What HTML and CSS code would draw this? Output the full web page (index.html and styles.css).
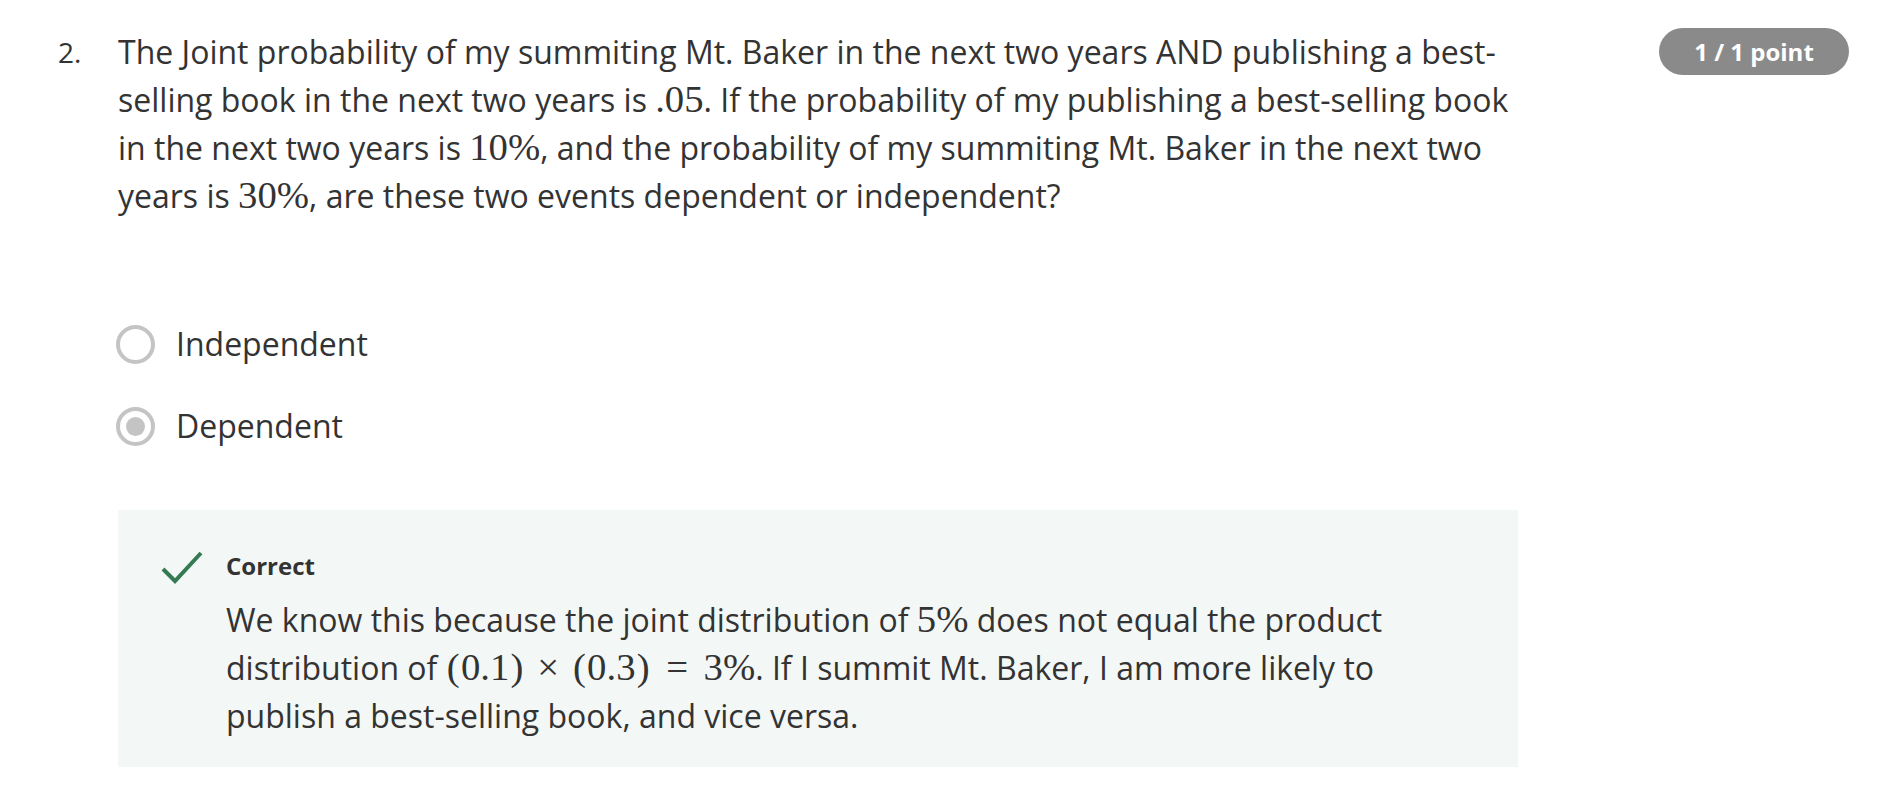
FILE: index.html
```html
<!DOCTYPE html>
<html lang="en">
<head>
<meta charset="utf-8">
<title>Quiz question</title>
<link rel="stylesheet" href="styles.css">
</head>
<body>
<div class="question">
  <div class="num">2.</div>
  <div class="main">
    <div class="prompt">The Joint probability of my summiting Mt. Baker in the next two years AND publishing a best-selling book in the next two years is <span class="m">.05</span>. If the probability of my publishing a best-selling book in the next two years is <span class="m">10%</span>, and the probability of my summiting Mt. Baker in the next two years is <span class="m">30%</span>, are these two events dependent or independent?</div>
    <div class="options">
      <div class="option"><span class="radio"></span><span class="label">Independent</span></div>
      <div class="option"><span class="radio checked"></span><span class="label">Dependent</span></div>
    </div>
    <div class="feedback">
      <svg class="check" width="42" height="34" viewBox="0 0 42 34"><path d="M2 19 L14 31 L40 3" fill="none" stroke="#357a52" stroke-width="4"/></svg>
      <div class="fb-body">
        <div class="fb-title">Correct</div>
        <div class="fb-text">We know this because the joint distribution of <span class="m">5%</span> does not equal the product distribution of <span class="m"><span class="p">(</span>0.1<span class="p">)</span><span class="bin">×</span><span class="p">(</span>0.3<span class="p">)</span><span class="rel">=</span>3%</span>. If I summit Mt. Baker, I am more likely to publish a best-selling book, and vice versa.</div>
      </div>
    </div>
  </div>
  <div class="badge">1 / 1 point</div>
</div>
</body>
</html>
```

FILE: styles.css
```css
html, body {
  margin: 0;
  padding: 0;
  background: #ffffff;
}
body {
  font-family: "Open Sans", "Liberation Sans", sans-serif;
  color: #333333;
}
.question {
  display: flex;
  align-items: flex-start;
  padding: 28px 0 0 0;
}
.num {
  width: 118px;
  padding-left: 58px;
  box-sizing: border-box;
  font-size: 28px;
  line-height: 48px;
  color: #333;
  flex: none;
}
.main {
  width: 1400px;
  flex: none;
}
.prompt {
  font-size: 32px;
  line-height: 48px;
}
.m {
  font-family: "Liberation Serif", "DejaVu Serif", serif;
  font-size: 1.21em;
  line-height: 1;
}
.p {
  margin: 0 0.03em;
}
.bin {
  margin: 0 0.33em;
}
.rel {
  margin: 0 0.4em;
}
.options {
  margin-top: 100px;
  display: flex;
  flex-direction: column;
  gap: 34px;
}
.option {
  display: flex;
  align-items: center;
  height: 48px;
}
.radio {
  width: 39px;
  height: 39px;
  box-sizing: border-box;
  border: 4px solid #c4c4c4;
  border-radius: 50%;
  margin-left: -2px;
  margin-right: 21px;
  display: flex;
  align-items: center;
  justify-content: center;
}
.radio.checked::after {
  content: "";
  width: 19px;
  height: 19px;
  border-radius: 50%;
  background: #c4c4c4;
}
.label {
  font-size: 32px;
  line-height: 48px;
}
.feedback {
  margin-top: 60px;
  background: #f3f8f6;
  display: flex;
  align-items: flex-start;
  padding: 40px 0 27px 43px;
}
.check {
  flex: none;
  margin-right: 23px;
}
.fb-body {
  width: 1230px;
}
.fb-title {
  font-size: 24px;
  font-weight: 700;
  line-height: 32px;
}
.fb-text {
  font-size: 32px;
  line-height: 48px;
  margin-top: 14px;
}
.badge {
  margin-left: 141px;
  width: 190px;
  height: 47px;
  border-radius: 24px;
  background: #8a8a8a;
  color: #fff;
  font-weight: 700;
  font-size: 24px;
  display: flex;
  align-items: center;
  justify-content: center;
  flex: none;
}
```
